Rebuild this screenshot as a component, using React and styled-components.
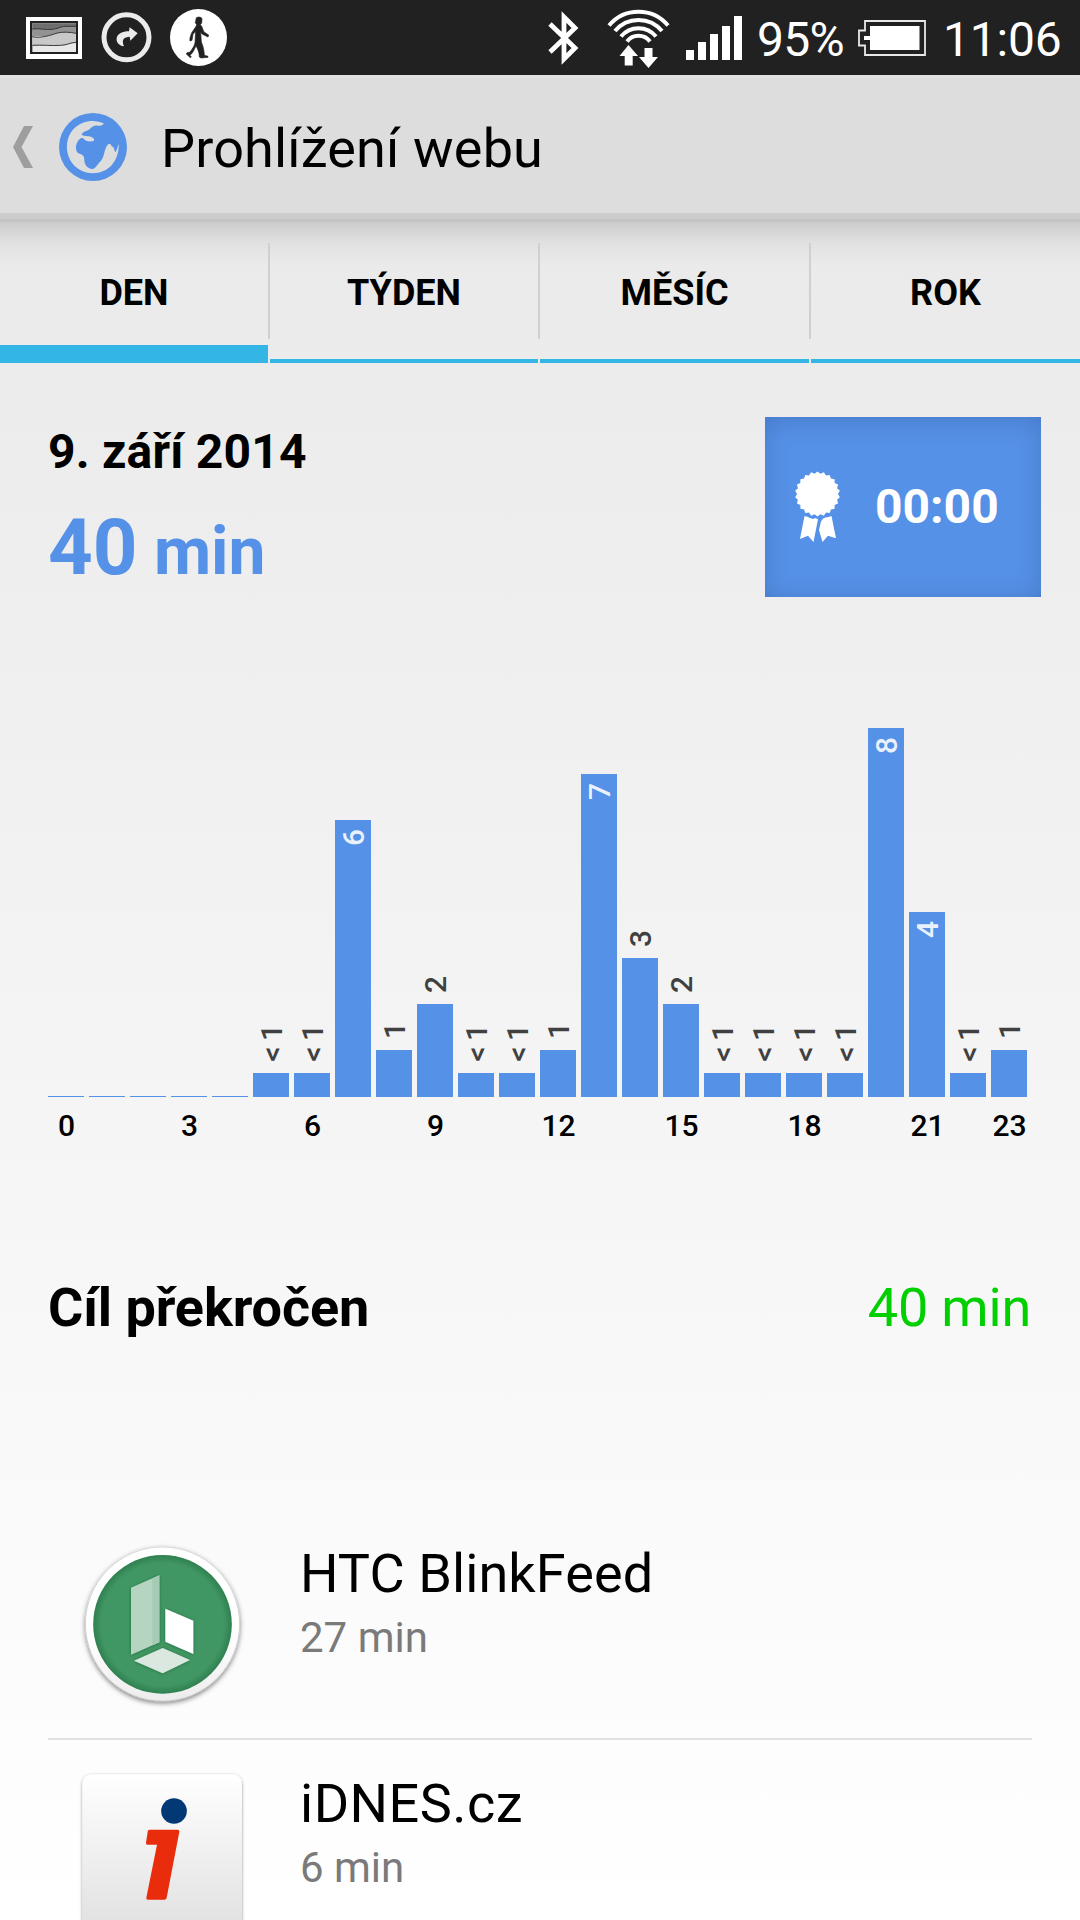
import React from 'react';
import styled, { createGlobalStyle } from 'styled-components';

const BLUE = '#5591e7';
const HOLO = '#33b5e5';

const GlobalStyle = createGlobalStyle`
  * {
    box-sizing: border-box;
  }
  body {
    margin: 0;
    font-family: Roboto, "Noto Sans", sans-serif;
    color: #000;
  }
  svg {
    display: block;
    flex: none;
  }
`;

const Screen = styled.div`
  width: 1080px;
  height: 1920px;
  overflow: hidden;
  background: linear-gradient(#e8e8e8 75px, #fff 1920px);
`;

const StatusBar = styled.div`
  display: flex;
  align-items: center;
  justify-content: space-between;
  height: 75px;
  padding-left: 26px;
  background: #212121;
  color: #fff;
`;

const StatusGroup = styled.div`
  display: flex;
  align-items: center;
  gap: ${props => props.$gap}px;
  height: 75px;
  padding-left: ${props => props.$indent || 0}px;
`;

const StatusText = styled.span`
  width: ${props => props.$width}px;
  padding: 4px 0 0 ${props => props.$indent || 0}px;
  font-size: 48px;
  line-height: 56px;
  letter-spacing: ${props => props.$spacing || 0}px;
  white-space: nowrap;
`;

const ActionBar = styled.header`
  display: flex;
  align-items: center;
  height: 147px;
  padding: 6px 0 9px 13px;
  background: linear-gradient(#e1e1e1 3px, #ddd 3px, #ddd 138px, #ccc 138px, #ccc 144px, #c4c4c4 144px);
`;

const Title = styled.h1`
  margin: 0;
  padding: 3px 0 0 34px;
  font-size: 54px;
  font-weight: 400;
  line-height: 64px;
  letter-spacing: 0.15px;
`;

const BackIcon = styled.svg`
  margin-right: 26px;
`;

const Tabs = styled.nav`
  display: grid;
  grid-template-columns: 268px 268px 269px 269px;
  column-gap: 2px;
  height: 141px;
  background: linear-gradient(rgba(0, 0, 0, 0.13), rgba(0, 0, 0, 0.035) 22px, rgba(0, 0, 0, 0) 44px);
`;

const Tab = styled.div`
  position: relative;
  display: flex;
  align-items: center;
  justify-content: center;
  padding-top: ${props => (props.$active ? 18 : 4)}px;
  border-bottom: ${props => (props.$active ? 18 : 4)}px solid ${HOLO};
  font-size: 36px;
  font-weight: 700;

  &:not(:first-child)::before {
    content: "";
    position: absolute;
    top: 21px;
    left: -2px;
    width: 2px;
    height: 96px;
    background: #d0d0d0;
  }
`;

const Summary = styled.section`
  display: flex;
  justify-content: space-between;
  margin: 54px 39px 0 48px;
`;

const DateText = styled.div`
  padding-top: 7px;
  font-size: 48px;
  font-weight: 700;
  line-height: 56px;
  letter-spacing: 0.2px;
`;

const Total = styled.div`
  margin-top: 23px;
  font-size: 78px;
  font-weight: 700;
  line-height: 90px;
  color: ${BLUE};
`;

const Unit = styled.span`
  font-size: 66px;
  line-height: 66px;
`;

const Reward = styled.div`
  display: flex;
  align-items: center;
  width: 276px;
  height: 180px;
  padding-left: 30px;
  background: ${BLUE};
  box-shadow: inset 0 3px 26px rgba(0, 0, 40, 0.16);
  color: #fff;
`;

const RewardTime = styled.span`
  padding: 0 0 2px 35px;
  font-size: 48px;
  font-weight: 700;
`;

const Chart = styled.section`
  display: grid;
  grid-template-columns: repeat(24, 36px);
  column-gap: 5px;
  margin-left: 48px;
`;

const Column = styled.div`
  display: flex;
  flex-direction: column;
  justify-content: flex-end;
  height: 500px;
`;

const Bar = styled.div`
  background: ${BLUE};
`;

const BarLabel = styled.span`
  display: block;
  width: 36px;
  padding-top: 11px;
  writing-mode: vertical-rl;
  transform: translateX(1px) rotate(180deg);
  font-size: 30px;
  font-weight: 500;
  line-height: 36px;
  word-spacing: -2px;
  white-space: nowrap;
  color: #404040;
`;

const InsideLabel = styled(BarLabel)`
  height: 100%;
  padding: 0 0 9px;
  text-align: right;
  color: rgba(255, 255, 255, 0.88);
`;

const AxisLabel = styled.span`
  margin-top: 11px;
  padding-left: 1px;
  font-size: 30px;
  font-weight: 500;
  line-height: 36px;
  text-align: center;
`;

const Goal = styled.section`
  display: flex;
  justify-content: space-between;
  margin: 132px 49px 0 48px;
  font-size: 54px;
  line-height: 64px;
`;

const GoalTitle = styled.span`
  font-weight: 700;
  letter-spacing: -0.1px;
`;

const GoalValue = styled.span`
  letter-spacing: -0.2px;
  color: #00d000;
`;

const AppList = styled.ul`
  margin: 170px 48px 0;
  padding: 0;
  list-style: none;
`;

const AppRow = styled.li`
  display: flex;
  gap: 58px;
  height: 230px;
  padding: 32px 0 0 34px;
  border-bottom: 2px solid #e1e1e1;
`;

const AppName = styled.div`
  font-size: 54px;
  line-height: 64px;
  letter-spacing: ${props => props.$spacing}px;
`;

const AppTime = styled.div`
  margin-top: 7px;
  font-size: 42px;
  line-height: 50px;
  color: #7a7a7a;
`;

const AppIcon = styled.svg`
  margin-top: 2px;
  overflow: visible;
`;

const tabs = ['DEN', 'TÝDEN', 'MĚSÍC', 'ROK'];

// minutes per hour, 0.5 stands for less than a minute
const hours = [0, 0, 0, 0, 0, 0.5, 0.5, 6, 1, 2, 0.5, 0.5, 1, 7, 3, 2, 0.5, 0.5, 0.5, 0.5, 8, 4, 0.5, 1];

const sealPoints = () => {
  const points = [];
  for (let i = 0; i < 44; i++) {
    const r = i % 2 ? 22.6 : 20.4;
    const a = (i * Math.PI) / 22;
    points.push(`${(22.5 + r * Math.cos(a)).toFixed(2)},${(23 + r * Math.sin(a)).toFixed(2)}`);
  }
  return points.join(' ');
};

const PictureIcon = () => (
  <svg width="56" height="42" viewBox="78 54 168 126">
    <path fill="#fff" d="M78 54h168v126H78z" />
    <path fill="#212121" d="M90 66h144v99H90z" />
    <path fill="#e8e8e8" d="M97 73h131v86H97z" />
    <path fill="#6e6e6e" d="M97 73h131v26H97z" />
    <path fill="#929292" d="M97 90h62c14 0 24-5 36-8h33v30H97z" />
    <path fill="#c8c8c8" d="M97 113l30 1c30-4 45-14 72-14l29 3v28c-18 0-26 8-46 9-30-2-55-2-85 0z" />
    <path
      fill="none"
      stroke="#3a3a3a"
      strokeWidth="3"
      d="M97 90c20-3 40 4 62 1 20-4 22-8 36-9h33M97 113c22 6 54-4 75-11 15-4 38-3 56 1M97 139c30-2 55 2 85 0 20-1 28-8 46-9"
    />
  </svg>
);

const ShareIcon = () => (
  <svg width="51" height="51" viewBox="302 38 153 153">
    <circle cx="378.500" cy="114" r="67.500" fill="none" stroke="#ebebeb" strokeWidth="15" />
    <path fill="#ebebeb" d="M388 84l24 18-22 22-2-12c-16 1-26 8-17 29-17-2-24-14-22-25 3-13 17-20 37-20z" />
  </svg>
);

const WalkIcon = () => (
  <svg width="57" height="57" viewBox="510 27 171 171">
    <circle cx="595.500" cy="112.500" r="85.500" fill="#fff" />
    <path
      fill="#212121"
      stroke="#212121"
      strokeWidth="2"
      d="M589 53q8-4 15 0l2 4-1 12-4 5c3 3 6 7 7 13l4 9 14 9-2 6-18-9-4-6 2 30c5 12 8 22 9 40l11 3v3l-21 2-5-3c0-14-5-24-10-34-5 12-10 22-18 29l4 5-3 2-12-11 2-4 8-1c7-9 14-18 16-29l2-34-8 9-3 18-6 2c-2-6 2-16 5-24l13-20 2-5-4-6z"
    />
  </svg>
);

const BluetoothIcon = () => (
  <svg width="31" height="54" viewBox="0 0 31 54">
    <path fill="none" stroke="#fff" strokeWidth="4.800" d="M2 13l25 24-11 11V6l11 11L2 41" />
  </svg>
);

const WifiIcon = () => (
  <svg width="63" height="60" viewBox="0 0 63 60">
    <g fill="none" stroke="#fff" strokeWidth="4">
      <path d="M2 17.500a38.500 38.500 0 0 1 59 0" />
      <path d="M8 23a30.500 30.500 0 0 1 47 0" />
      <path d="M14 28.500a22.500 22.500 0 0 1 35 0" />
      <path d="M20 33.500a14.500 14.500 0 0 1 23 0" />
    </g>
    <path fill="#fff" d="M21.500 37l9.500 11h-5.300v9.500h-8V48H12.500zM37.500 40h8v9H51l-9.500 11L32 49h5.500z" />
  </svg>
);

const SignalIcon = () => (
  <svg width="56" height="44" viewBox="0 0 56 44" fill="#fff">
    <path d="M0 34h8v10H0zM12 26h8v18h-8zM24 18h8v26h-8zM36 10h8v34h-8zM48 0h8v44h-8z" />
  </svg>
);

const BatteryIcon = () => (
  <svg width="68" height="36" viewBox="0 0 68 36">
    <path fill="none" stroke="#e8e8e8" strokeWidth="1.800" d="M7 1h60v34H7v-9.500H1v-15h6z" />
    <path fill="#fff" d="M12 6h49.500v24H12V20H6v-4h6z" />
  </svg>
);

const GlobeIcon = () => (
  <svg width="68" height="68" viewBox="166 129 190 203" preserveAspectRatio="none">
    <ellipse cx="261" cy="230.500" rx="95" ry="101.500" fill={BLUE} />
    <path
      fill="#ddd"
      d="M292 161C275 151 252 150 233 158 204 170 188 198 188 230c0 45 32 79 73 79 42 0 73-35 72-88-3 8-5 18-9 25-4-2-3-14-8-16-5-1-4-8-8-9-5 0-8 6-11 12-5 13-5 28-14 39-10 10-13 22-24 24-12 0-20-10-22-22-1-7 1-14-5-19-8-5-16-5-18-16-2-12 2-28 14-35 7-3 8 5 14 8 7 3 16 3 22 0 1-7-4-11-11-13-9-2-19 0-24-6 5-10 16-10 24-17 5-6 12-11 21-9 7 1 13-2 18-6z"
    />
  </svg>
);

const RibbonIcon = () => (
  <svg width="45" height="72" viewBox="0 0 45 72" fill="#fff">
    <polygon points={sealPoints()} />
    <path d="M9.500 45l2.800.8L15 47l3 1 2-1 3 1.300L18.500 71 13 64.800 5 68z" />
    <path d="M36.500 45l-3 1-3 .5-2.500 1-2 3L24 59l3.500 12 5.500-6.200 8 2.500z" />
  </svg>
);

const BlinkFeedIcon = () => (
  <AppIcon width="160" height="160" viewBox="66 70 480 480">
    <defs>
      <radialGradient id="green">
        <stop offset="88%" stopColor="#419763" />
        <stop offset="100%" stopColor="#2f8050" />
      </radialGradient>
      <linearGradient id="rim" x1="0" y1="0" x2="0" y2="1">
        <stop offset="60%" stopColor="#fff" />
        <stop offset="100%" stopColor="#ececec" />
      </linearGradient>
      <filter id="drop" x="-10%" y="-10%" width="120%" height="125%">
        <feDropShadow dx="0" dy="6" stdDeviation="8" floodOpacity="0.5" />
      </filter>
      <filter id="soft">
        <feDropShadow dx="0" dy="1" stdDeviation="5" floodColor="#0b4a25" floodOpacity="0.6" />
      </filter>
    </defs>
    <circle cx="307.500" cy="310" r="231" fill="url(#rim)" stroke="#c9c9c9" strokeWidth="2" filter="url(#drop)" />
    <circle cx="307.500" cy="311" r="208" fill="url(#green)" />
    <g filter="url(#soft)">
      <path fill="#b5d5c1" d="M213 201l85-37v201l-85 37z" />
      <path fill="#a6cbb4" d="M277 173l21-9v201l-21 9z" />
      <path fill="#fff" d="M316 264l84 36v100l-84-37z" />
      <path fill="#dae8df" d="M308 382l82 36-82 40-86-38z" />
    </g>
  </AppIcon>
);

const IdnesIcon = () => (
  <AppIcon width="160" height="160" viewBox="66 160 480 480">
    <defs>
      <linearGradient id="card" x1="0" y1="0" x2="0" y2="1">
        <stop offset="0" stopColor="#fff" />
        <stop offset="1" stopColor="#e0e0e0" />
      </linearGradient>
      <filter id="cardDrop" x="-5%" y="-5%" width="110%" height="110%">
        <feDropShadow dx="0" dy="3" stdDeviation="4" floodOpacity="0.45" />
      </filter>
    </defs>
    <rect x="67" y="161" width="479" height="479" rx="28" fill="url(#card)" filter="url(#cardDrop)" />
    <circle cx="342" cy="271" r="38.500" fill="#023975" />
    <path
      fill="#e92d0c"
      d="M268 327h85q6 0 5 6l-38 198q-1 6-7 6h-49q-6 0-5-6l32-159h-28q-6 0-5-6l5-33q1-6 5-6z"
    />
  </AppIcon>
);

const apps = [
  { name: 'HTC BlinkFeed', time: '27 min', spacing: 0.1, Icon: BlinkFeedIcon },
  { name: 'iDNES.cz', time: '6 min', spacing: 0.5, Icon: IdnesIcon },
];

const HourColumn = ({ value }) => {
  const inside = value > 3;
  const text = value < 1 ? '< 1' : value;
  return (
    <Column>
      {value > 0 && !inside && <BarLabel>{text}</BarLabel>}
      <Bar style={{ height: value * 46 + 1 }}>
        {inside && <InsideLabel>{text}</InsideLabel>}
      </Bar>
    </Column>
  );
};

const App = () => (
  <Screen>
    <GlobalStyle />
    <StatusBar>
      <StatusGroup $gap={18.5}>
        <PictureIcon />
        <ShareIcon />
        <WalkIcon />
      </StatusGroup>
      <StatusGroup $gap={15}>
        <BluetoothIcon />
        <StatusGroup $gap={16} $indent={13}>
          <WifiIcon />
          <SignalIcon />
        </StatusGroup>
        <StatusText $width={86} $spacing={-0.7}>95%</StatusText>
        <BatteryIcon />
        <StatusText $width={139} $indent={2} $spacing={-0.2}>11:06</StatusText>
      </StatusGroup>
    </StatusBar>
    <ActionBar>
      <BackIcon width="20" height="42" viewBox="0 0 20 42">
        <path fill="#9e9e9e" d="M11 0h9L8.500 21 20 42h-9L0 21z" />
      </BackIcon>
      <GlobeIcon />
      <Title>Prohlížení webu</Title>
    </ActionBar>
    <Tabs>
      {tabs.map((tab, i) => (
        <Tab key={tab} $active={i === 0}>{tab}</Tab>
      ))}
    </Tabs>
    <Summary>
      <div>
        <DateText>9. září 2014</DateText>
        <Total>40<Unit> min</Unit></Total>
      </div>
      <Reward>
        <RibbonIcon />
        <RewardTime>00:00</RewardTime>
      </Reward>
    </Summary>
    <Chart>
      {hours.map((value, hour) => (
        <HourColumn key={hour} value={value} />
      ))}
      {hours.map((value, hour) => (
        <AxisLabel key={hour}>{hour % 3 === 0 || hour === 23 ? hour : ''}</AxisLabel>
      ))}
    </Chart>
    <Goal>
      <GoalTitle>Cíl překročen</GoalTitle>
      <GoalValue>40 min</GoalValue>
    </Goal>
    <AppList>
      {apps.map(({ name, time, spacing, Icon }) => (
        <AppRow key={name}>
          <Icon />
          <div>
            <AppName $spacing={spacing}>{name}</AppName>
            <AppTime>{time}</AppTime>
          </div>
        </AppRow>
      ))}
    </AppList>
  </Screen>
);

export default App;
